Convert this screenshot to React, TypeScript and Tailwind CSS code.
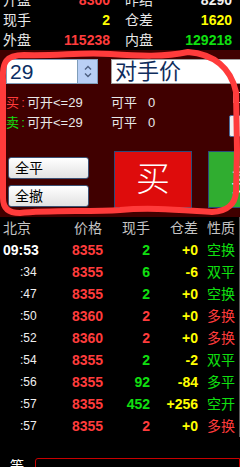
import React from "react";

const FONT = "font-['Liberation_Sans','Noto_Sans_CJK_SC',sans-serif]";

type Row = {
  t: string;
  main?: boolean;
  p: string;
  q: string;
  qc: "r" | "g";
  d: string;
  k: string;
  kc: "r" | "g";
};

const rows: Row[] = [
  { t: "09:53", main: true, p: "8355", q: "2", qc: "g", d: "+0", k: "空换", kc: "g" },
  { t: ":34", p: "8355", q: "6", qc: "g", d: "-6", k: "双平", kc: "g" },
  { t: ":47", p: "8355", q: "2", qc: "g", d: "+0", k: "空换", kc: "g" },
  { t: ":50", p: "8360", q: "2", qc: "r", d: "+0", k: "多换", kc: "r" },
  { t: ":52", p: "8360", q: "2", qc: "r", d: "+0", k: "多换", kc: "r" },
  { t: ":54", p: "8355", q: "2", qc: "g", d: "-2", k: "双平", kc: "g" },
  { t: ":56", p: "8355", q: "92", qc: "g", d: "-84", k: "多平", kc: "g" },
  { t: ":57", p: "8355", q: "452", qc: "g", d: "+256", k: "空开", kc: "g" },
  { t: ":57", p: "8355", q: "2", qc: "r", d: "+0", k: "多换", kc: "r" },
];

function TopRow({
  l1,
  v1,
  c1,
  l2,
  v2,
  c2,
}: {
  l1: string;
  v1: string;
  c1: string;
  l2: string;
  v2: string;
  c2: string;
}) {
  return (
    <div className="flex h-[20px] items-center leading-[20px]">
      <span className="w-[40px] shrink-0 pl-[3px] text-[14px] text-[#e8e8e8]">{l1}</span>
      <span className={`w-[70px] shrink-0 text-right text-[14px] font-bold ${c1}`}>{v1}</span>
      <span className="ml-[15px] w-[40px] shrink-0 text-[14px] text-[#e8e8e8]">{l2}</span>
      <span className={`w-[67px] shrink-0 text-right text-[14px] font-bold ${c2}`}>{v2}</span>
    </div>
  );
}

export default function App() {
  return (
    <div className={`relative h-[467px] w-[240px] overflow-hidden bg-black ${FONT}`}>
      {/* quote rows */}
      <div className="-mt-[10px]">
        <TopRow l1="开盘" v1="8300" c1="text-[#ff3c3c]" l2="昨结" v2="8290" c2="text-[#f0f0f0]" />
        <TopRow l1="现手" v1="2" c1="text-[#ffff00]" l2="仓差" v2="1620" c2="text-[#ffff00]" />
        <TopRow l1="外盘" v1="115238" c1="text-[#ff3c3c]" l2="内盘" v2="129218" c2="text-[#10e010]" />
      </div>

      {/* order panel */}
      <div className="h-[167px] overflow-hidden bg-[#400000]">
        <div className="flex pt-[9px]">
          <div className="ml-[6px] flex h-[25px] w-[92px] shrink-0 border border-[#7f9db9] bg-white">
            <div className="flex flex-1 items-center pl-[3px] text-[21px] leading-none text-[#0b2d63]">29</div>
            <div className="flex w-[20px] shrink-0 flex-col items-center justify-center gap-[3px] border-l border-[#7f9db9] bg-[#b9cff5]">
              <svg width="8" height="5" viewBox="0 0 8 5">
                <path d="M1 4.5 L4 1.5 L7 4.5" stroke="#4d5f80" strokeWidth="1.4" fill="none" />
              </svg>
              <svg width="8" height="5" viewBox="0 0 8 5">
                <path d="M1 0.5 L4 3.5 L7 0.5" stroke="#4d5f80" strokeWidth="1.4" fill="none" />
              </svg>
            </div>
          </div>
          <div className="ml-[13px] flex h-[25px] w-[140px] shrink-0 items-center border border-[#a0a0a0] bg-white pl-[3px] text-[22px] leading-none text-[#0f2d5c]">
            对手价
          </div>
        </div>

        <div className="mt-[9px] flex h-[20px] items-center text-[13px] leading-[20px] text-[#e8e8e8]">
          <span className="ml-[6px] shrink-0 text-[#ff3c3c]">买</span>
          <span className="w-[8px] shrink-0 text-center text-[#ff3c3c]">:</span>
          <span className="w-[84px] shrink-0">可开&lt;=29</span>
          <span className="w-[37px] shrink-0">可平</span>
          <span className="shrink-0">0</span>
          <span className="flex-1" />
          <span className="-mr-[4px] -mt-[1px] h-[11px] w-[11px] shrink-0 self-start border border-[#c8c8c8]" />
        </div>
        <div className="flex h-[20px] items-center text-[13px] leading-[20px] text-[#e8e8e8]">
          <span className="ml-[6px] shrink-0 text-[#10e010]">卖</span>
          <span className="w-[8px] shrink-0 text-center text-[#10e010]">:</span>
          <span className="w-[84px] shrink-0">可开&lt;=29</span>
          <span className="w-[37px] shrink-0">可平</span>
          <span className="shrink-0">0</span>
          <span className="flex-1" />
          <span className="-mr-[6px] mt-[2px] h-[22px] w-[17px] shrink-0 self-start rounded-[2px] border border-[#4a6a9a] bg-[#f0f0f0]" />
        </div>

        <div className="mt-[18px] flex">
          <div className="ml-[8px] flex w-[81px] shrink-0 flex-col gap-[6px] pt-[6px]">
            <div className="flex h-[22px] items-center whitespace-nowrap rounded-[3px] border border-[#3c5274] bg-gradient-to-b from-[#ffffff] to-[#e2e2e2] pl-[6px] text-[14px] text-black">
              全平
            </div>
            <div className="flex h-[22px] items-center whitespace-nowrap rounded-[3px] border border-[#3c5274] bg-gradient-to-b from-[#ffffff] to-[#e2e2e2] pl-[6px] text-[14px] text-black">
              全撤
            </div>
          </div>
          <div className="ml-[25px] flex h-[57px] w-[78px] shrink-0 items-center justify-center border border-[#2c4a7a] bg-[#de0c0c] text-[34px] font-light text-white">
            买
          </div>
          <div className="ml-[16px] flex h-[57px] w-[78px] shrink-0 items-center justify-center border border-[#2c4a7a] bg-[#30ad30] text-[34px] font-light text-white">
            卖
          </div>
        </div>
      </div>

      {/* tick table */}
      <div className="border-r border-[#5a5a5a]">
        <div className="flex h-[22px] items-center pl-[3px] text-[14px] leading-[22px] text-[#c4c4c4]">
          <span className="w-[69px] shrink-0">北京</span>
          <span className="w-[30px] shrink-0 text-right">价格</span>
          <span className="w-[48px] shrink-0 text-right">现手</span>
          <span className="w-[48px] shrink-0 text-right">仓差</span>
          <span className="shrink-0 pl-[9px]">性质</span>
        </div>
        {rows.map((r, i) => (
          <div key={i} className="flex h-[22px] items-center pl-[3px] leading-[22px]">
            {r.main ? (
              <span className="w-[69px] shrink-0 text-[14px] font-bold text-white">{r.t}</span>
            ) : (
              <span className="w-[69px] shrink-0 pl-[17px] text-[12px] text-[#f0f0f0]">{r.t}</span>
            )}
            <span className="w-[30px] shrink-0 text-right text-[14px] font-bold text-[#ff3c3c]">{r.p}</span>
            <span
              className={`w-[48px] shrink-0 text-right text-[14px] font-bold ${
                r.qc === "r" ? "text-[#ff3c3c]" : "text-[#10e010]"
              }`}
            >
              {r.q}
            </span>
            <span className="w-[48px] shrink-0 text-right text-[14px] font-bold text-[#ffff00]">{r.d}</span>
            <span
              className={`shrink-0 pl-[9px] text-[14px] ${r.kc === "r" ? "text-[#ff3c3c]" : "text-[#10e010]"}`}
            >
              {r.k}
            </span>
          </div>
        ))}
      </div>

      {/* bottom partial row */}
      <div className="mt-[21px] flex h-[20px] leading-[16px]">
        <span className="ml-[10px] shrink-0 text-[14px] text-white">等</span>
        <div className="ml-[11px] h-[20px] flex-1 rounded-tl-[3px] border border-[#c80000]" />
      </div>

      {/* hand-drawn annotation */}
      <svg
        className="pointer-events-none absolute left-0 top-0"
        width="240"
        height="467"
        viewBox="0 0 240 467"
      >
        <path
          d="M3 80 C2 62 6 55 24 55 C60 56 80 52 110 54 C140 56 165 57 188 52 C214 54 231 68 236 92 L237 150 L236 192 C235 206 226 211 212 212 C180 210 150 207 120 210 C90 212 50 210 20 213 C8 213 3 208 3 198 Z"
          stroke="#ff3b3b"
          strokeWidth="6"
          fill="none"
          strokeLinejoin="round"
        />
      </svg>
    </div>
  );
}
